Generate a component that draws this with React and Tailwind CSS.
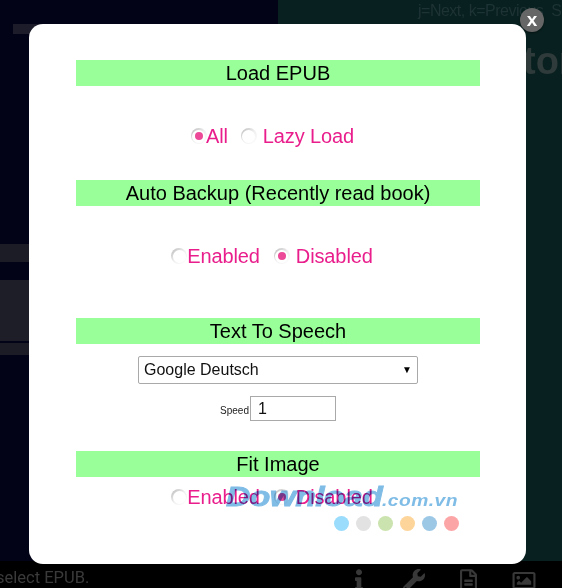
import React from "react";
import { FaInfo, FaWrench, FaRegFileAlt, FaRegImage } from "react-icons/fa";

function Radio({ checked }) {
  return (
    <span className="inline-flex w-[16px] h-[16px] shrink-0 items-center justify-center rounded-full bg-gradient-to-br from-[#b8b8b8] via-[#efefef] to-[#ffffff]">
      <span className="flex w-[13px] h-[13px] items-center justify-center rounded-full bg-white">
        {checked && <span className="block w-[8px] h-[8px] rounded-full bg-[#ec4a98]" />}
      </span>
    </span>
  );
}

function Heading({ children, className = "" }) {
  return (
    <div className={`h-[26px] bg-[#99ff99] text-center text-[20px] leading-[26px] text-black ${className}`}>
      {children}
    </div>
  );
}

function Toggle({ className = "" }) {
  return (
    <div className={`flex h-[24px] items-center justify-center pr-[12px] text-[20px] leading-[24px] tracking-[-0.12px] text-[#e91e8c] ${className}`}>
      <Radio />
      <span>Enabled</span>
      <span className="ml-[14px] flex items-center">
        <Radio checked />
      </span>
      <span className="ml-[6px]">Disabled</span>
    </div>
  );
}

export default function App() {
  return (
    <div className="relative h-[588px] w-[562px] overflow-hidden bg-black font-['Liberation_Sans',Arial,sans-serif]">
      <div className="flex h-[561px]">
        <div className="flex w-[278px] shrink-0 flex-col bg-[#030318]">
          <div className="mt-[24px] ml-[13px] h-[10px] w-[40px] bg-[#1c1c2a]" />
          <div className="mt-[210px] h-[18px] w-[60px] bg-[#1c1c26]" />
          <div className="mt-[18px] h-[61px] w-[60px] bg-[#1e1e28]" />
          <div className="mt-[2px] h-[12px] w-[60px] bg-[#1c1c26]" />
        </div>
        <div className="w-[284px] shrink-0 overflow-hidden bg-[#08201f]">
          <div className="pl-[140px] pt-[1px] whitespace-nowrap text-[16px] leading-[20px] tracking-[-0.5px] text-[#1e3335]">
            j=Next, k=Previous&nbsp;&nbsp;S
          </div>
          <div className="pl-[245px] mt-[18px] whitespace-nowrap text-[38px] leading-[44px] font-bold text-[#2f3a3a]">
            tor
          </div>
        </div>
      </div>

      <div className="flex h-[27px] items-start overflow-hidden">
        <span className="ml-[-4px] mt-[7px] font-['Roboto',sans-serif] text-[16.5px] leading-[20px] text-[#3a3a3a]">
          select EPUB.
        </span>
        <div className="ml-auto mr-[25px] mt-[8px] flex items-start text-[#383838]">
          <FaInfo className="h-[22px] w-[8px]" />
          <FaWrench className="ml-[40px] h-[22px] w-[22px]" />
          <FaRegFileAlt className="ml-[35px] h-[23px] w-[17px]" />
          <FaRegImage className="ml-[34px] h-[23px] w-[26px]" />
        </div>
      </div>

      <div className="absolute left-[29px] top-[24px] h-[540px] w-[497px] rounded-[14px] bg-white px-[47px] pt-[36px] pr-[46px]">
        <Heading>Load EPUB</Heading>
        <div className="mt-[38px] flex h-[24px] items-center justify-center pr-[11px] text-[20px] leading-[24px] tracking-[-0.12px] text-[#e91e8c]">
          <Radio checked />
          <span className="ml-[-1px]">All</span>
          <span className="ml-[13px] flex items-center">
            <Radio />
          </span>
          <span className="ml-[6px]">Lazy Load</span>
        </div>

        <Heading className="mt-[32px]">Auto Backup (Recently read book)</Heading>
        <Toggle className="mt-[38px]" />

        <Heading className="mt-[50px]">Text To Speech</Heading>
        <div className="relative mx-auto mt-[12px] h-[28px] w-[280px]">
          <select className="h-full w-full appearance-none rounded-[2px] border border-[#a9a9a9] bg-white pl-[5px] text-[16px] text-[#111111] outline-none">
            <option>Google Deutsch</option>
          </select>
          <span className="absolute right-[6px] top-[8px] text-[10px] leading-[12px] text-black">▼</span>
        </div>
        <div className="mt-[12px] flex h-[25px] items-center justify-center">
          <span className="mt-[4px] text-[10px] leading-[12px] text-[#222222]">Speed</span>
          <input
            readOnly
            value="1"
            className="ml-px h-[25px] w-[86px] border border-[#a9a9a9] bg-white pl-[7px] text-[16px] text-[#111111] outline-none"
          />
        </div>

        <Heading className="mt-[30px]">Fit Image</Heading>
        <Toggle className="mt-[8px]" />

        <div className="absolute left-[197px] top-[458px] flex items-baseline whitespace-nowrap font-bold italic text-[#7fbce6] mix-blend-multiply">
          <span className="inline-block w-[156px] origin-left scale-x-[1.25] text-[27px] leading-[30px] tracking-[-0.5px] [-webkit-text-stroke:0.8px_#7fbce6]">
            Download
          </span>
          <span className="inline-block w-[78px] origin-left scale-x-[1.2] text-[16px] leading-[30px] tracking-[0.4px]">
            .com.vn
          </span>
        </div>
        <div className="absolute left-[305px] top-[492px] flex gap-[7px]">
          <span className="h-[15px] w-[15px] rounded-full bg-[#9adcfb]" />
          <span className="h-[15px] w-[15px] rounded-full bg-[#e2e2e2]" />
          <span className="h-[15px] w-[15px] rounded-full bg-[#cbe3ae]" />
          <span className="h-[15px] w-[15px] rounded-full bg-[#fdd59a]" />
          <span className="h-[15px] w-[15px] rounded-full bg-[#9cc8e6]" />
          <span className="h-[15px] w-[15px] rounded-full bg-[#fca5a7]" />
        </div>
      </div>

      <div className="absolute left-[520px] top-[8px] flex h-[24px] w-[24px] items-center justify-center rounded-full bg-[#666666] pb-[2px] text-[19px] font-bold leading-none text-white shadow-[0_1px_2px_rgba(0,0,0,0.4)]">
        x
      </div>
    </div>
  );
}
